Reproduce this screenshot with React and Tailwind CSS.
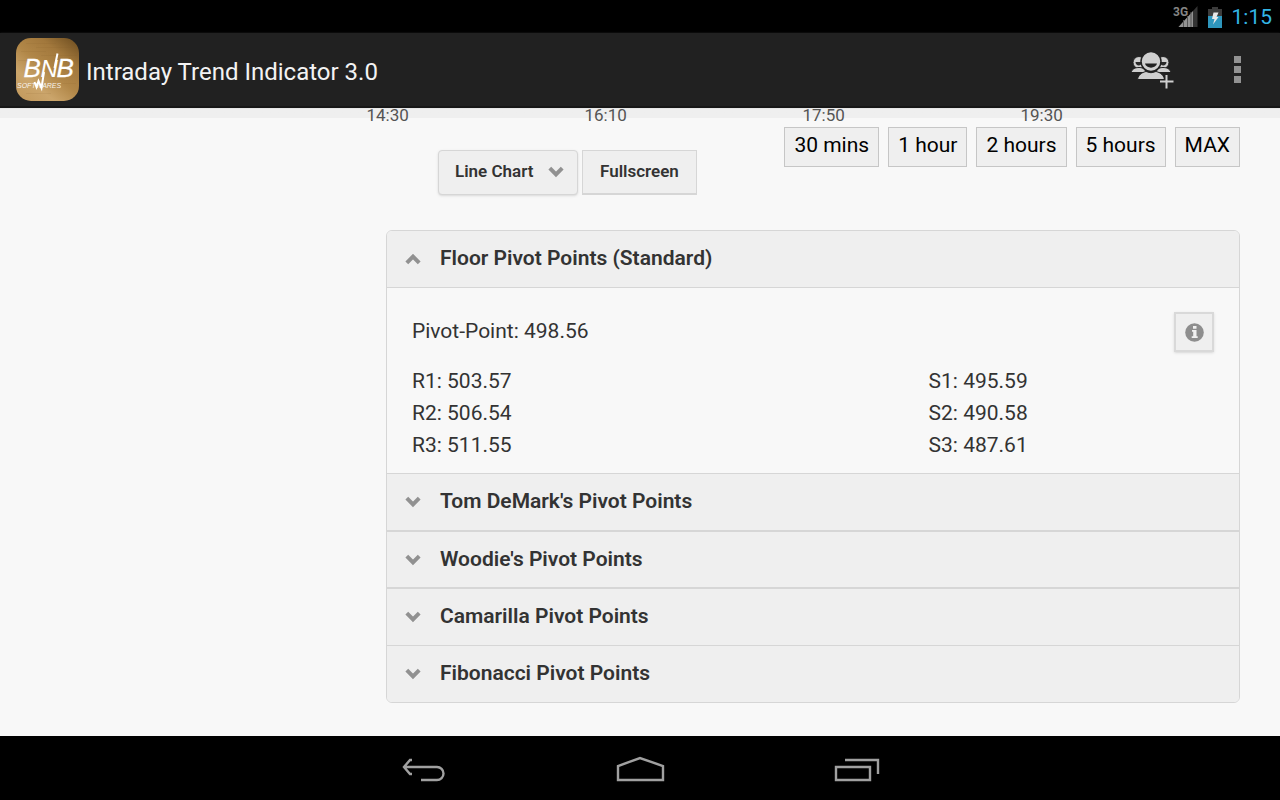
import React, { useState } from "react";

const ranges = ["30 mins", "1 hour", "2 hours", "5 hours", "MAX"];

const axisLabels = ["14:30", "16:10", "17:50", "19:30"];

const pivots = [
  {
    title: "Floor Pivot Points (Standard)",
    point: "498.56",
    resistance: ["503.57", "506.54", "511.55"],
    support: ["495.59", "490.58", "487.61"],
    divider: "h-14",
  },
  { title: "Tom DeMark's Pivot Points", divider: "h-[57px] border-t" },
  { title: "Woodie's Pivot Points", divider: "h-[57px] border-t-2" },
  { title: "Camarilla Pivot Points", divider: "h-[58px] border-t-2" },
  { title: "Fibonacci Pivot Points", divider: "h-[57px] border-t" },
];

const Chevron = ({ up }) => (
  <svg
    className={up ? "rotate-180" : ""}
    width="16"
    height="12"
    viewBox="0 0 16 12"
    fill="none"
    stroke="#919191"
    strokeWidth="4"
    aria-hidden="true"
  >
    <path d="M1.8 2.2 L8 8.4 L14.2 2.2" />
  </svg>
);

const Logo = () => (
  <svg width="63" height="63" viewBox="0 0 63 63" aria-hidden="true">
    <defs>
      <linearGradient id="gold" x1="0.1" y1="1" x2="0.9" y2="0">
        <stop offset="0" stopColor="#c39a5e" />
        <stop offset="0.25" stopColor="#cba56b" />
        <stop offset="0.5" stopColor="#b18748" />
        <stop offset="0.75" stopColor="#a2783c" />
        <stop offset="1" stopColor="#735223" />
      </linearGradient>
    </defs>
    <rect width="63" height="63" rx="15" fill="url(#gold)" />
    <g stroke="#7d5726" strokeOpacity="0.1" strokeWidth="1">
      <path d="M10 5.5H40M20 9.5H56M5 13.5H30M25 17.5H61M2 22.5H20M45 45.5H60M10 55.5H35" />
    </g>
    <g
      fill="#fff"
      fontFamily="'Liberation Sans', sans-serif"
      fontStyle="italic"
    >
      <g stroke="#fff" strokeWidth="0.3" fontSize="26">
        <text x="7.500" y="39">
          B
        </text>
        <text x="40.500" y="39">
          B
        </text>
      </g>
      <text x="24.500" y="39" fontSize="24">
        N
      </text>
      <text x="1" y="49.500" fontSize="7" fillOpacity="0.9">
        SOFTWARES
      </text>
    </g>
    {/* spikes of the trend line */}
    <path
      d="M38.500 30 L41.500 15.500 M28 34 L25.500 50 L22.500 43 L20.500 49 L18.500 44"
      fill="none"
      stroke="#fff"
      strokeWidth="2"
    />
  </svg>
);

const StatusBar = () => (
  <div className="flex h-[33px] items-center justify-end gap-2.5 bg-black pt-px pr-2">
    <svg width="25" height="22" viewBox="0 0 25 22" role="img">
      <title>Signal</title>
      <path d="M24.500 0V21H5.500Z" fill="#333" />
      <path d="M20 5V21H5.500Z" fill="#929292" />
      <path d="M10.500 14V21M14.500 10V21M18 6V21" stroke="#555" />
      <text
        x="0"
        y="10"
        fontSize="12"
        fontWeight="700"
        fontFamily="Roboto, sans-serif"
        fill="#858585"
        stroke="#000"
        strokeWidth="2"
        paintOrder="stroke"
      >
        3G
      </text>
    </svg>
    <svg width="14" height="21" viewBox="0 0 14 21" role="img">
      <title>Battery</title>
      <path d="M4 0H10V2H14V10H0V2H4Z" fill="#3c3c3c" />
      <rect y="9" width="14" height="12" fill="#2e96bd" />
      <path d="M5.500 5.500H10.500L8.500 10H10.500L5 17.500L6.500 12H4Z" fill="#e8e8e8" />
    </svg>
    <span className="text-[21px] leading-6 text-[#33b5e5]">1:15</span>
  </div>
);

const ActionBar = () => (
  <header className="flex h-[75px] items-center border-b-2 border-[#171717] bg-[#212121] pr-[35px] pl-4 shadow-[0_1px_2px_#888]">
    <Logo />
    <h1 className="ml-[7px] pt-1 text-2xl text-[#f3f3f3]">
      Intraday Trend Indicator 3.0
    </h1>
    <div className="ml-auto flex items-center gap-[55px]">
      <button type="button" aria-label="Add people">
        <svg width="44" height="38" viewBox="0 0 44 38" aria-hidden="true">
          <g fill="#cfcfcf" stroke="#212121">
            <circle cx="8" cy="11.500" r="6" />
            <circle cx="32" cy="11.500" r="6" />
            <path d="M0 21.500C1 17.500 5 16.500 8 16.500S14 17.500 15 21.500Z" />
            <path d="M25 21.500C26 17.500 29 16.500 32 16.500S39 17.500 40 21.500Z" />
            <path d="M4.500 11H11C11 15.500 4.500 15.500 4.500 11ZM29 11H35.500C35.500 15.500 29 15.500 29 11Z" fill="#2a2a2a" stroke="none" />
            <circle cx="20" cy="10.500" r="10" strokeWidth="1.500" />
            <path d="M6.500 28.500C7.500 22.500 13 21 15 20.500Q20 23 25 20.500C27 21 32.500 22.500 33.500 28.500Z" />
            <path d="M14 12.500H26C25 18 15 18 14 12.500Z" fill="#212121" stroke="none" />
          </g>
          <path d="M35.500 23V38M28 30.500H43" stroke="#212121" strokeWidth="5" />
          <path d="M35.500 24V37.500M29 30.500H42.500" stroke="#cfcfcf" strokeWidth="2" />
        </svg>
      </button>
      <button type="button" aria-label="More options" className="px-1">
        <svg width="7" height="27" viewBox="0 0 7 27" fill="#929292" aria-hidden="true">
          <path d="M0 0H7V7H0ZM0 10H7V17H0ZM0 20H7V27H0Z" />
        </svg>
      </button>
    </div>
  </header>
);

const PivotDetails = ({ item }) => (
  <div className="border-t border-[#d6d6d6] px-[25px] pt-6 pb-3 text-[21px] leading-8 text-[#333]">
    <div className="flex items-start justify-between">
      <p className="pt-[3px]">Pivot-Point: {item.point}</p>
      <button
        type="button"
        aria-label="About these pivot points"
        className="flex h-10 w-10 items-center justify-center border-2 border-[#d9d9d9] bg-[#efefef] shadow-sm"
      >
        <svg width="19" height="19" viewBox="0 0 19 19" aria-hidden="true">
          <circle cx="9.500" cy="9.500" r="9.300" fill="#8e8e8e" />
          <path
            d="M8 3H11.500V5.700H8ZM7 7H11.500V13.300H12.700V15H6.700V13.300H8.200V8.700H7Z"
            fill="#f1f1f1"
          />
        </svg>
      </button>
    </div>
    <div className="mt-[13px] grid grid-cols-[9fr_5fr]">
      <ul>
        {item.resistance.map((value, index) => (
          <li key={index}>
            R{index + 1}: {value}
          </li>
        ))}
      </ul>
      <ul className="pl-px">
        {item.support.map((value, index) => (
          <li key={index}>
            S{index + 1}: {value}
          </li>
        ))}
      </ul>
    </div>
  </div>
);

const NavBar = () => (
  <nav className="flex h-16 items-center justify-center gap-[166px] bg-black pt-[5px]">
    <button type="button" aria-label="Back">
      <svg width="52" height="30" viewBox="-3 0 52 30" fill="none" stroke="#a0a0a0" strokeWidth="2.4" aria-hidden="true">
        <path d="M5 11H38A6.500 6.500 0 0 1 38 24H22M13 4H11L5 11L11 18H13" />
      </svg>
    </button>
    <button type="button" aria-label="Home">
      <svg width="52" height="30" viewBox="0 0 52 30" fill="none" stroke="#a0a0a0" strokeWidth="2.4" aria-hidden="true">
        <path d="M4 24V10L26 2L49 10V24Z" />
      </svg>
    </button>
    <button type="button" aria-label="Recent apps">
      <svg width="52" height="30" viewBox="0 0 52 30" fill="none" stroke="#a0a0a0" strokeWidth="2.4" aria-hidden="true">
        <path d="M4 11H38V24H4ZM13 4H46V18" />
      </svg>
    </button>
  </nav>
);

const App = () => {
  const [open, setOpen] = useState(0);
  const [chartType, setChartType] = useState("Line Chart");

  return (
    <div className="flex min-h-screen flex-col bg-[#f8f8f8] font-['Roboto',sans-serif]">
      <StatusBar />
      <ActionBar />
      <main className="flex-1 pb-8">
        {/* time axis of the chart */}
        <div className="h-[19px] bg-linear-to-b from-[#dedede] from-0% via-[#efefef] via-10% to-[#efefef] to-50% bg-[length:100%_10px] bg-no-repeat">
          <div className="ml-[22%] flex pr-2 text-[17px] leading-[14px] text-[#545454]">
            {axisLabels.map((label) => (
              <span key={label} className="w-[218px] pr-1.5 text-center">
                {label}
              </span>
            ))}
          </div>
        </div>

        <div className="ml-[30%] pr-10 pl-0.5">
          <div className="flex items-start justify-between pl-[52px]">
            <div className="mt-[23px] flex gap-1 text-[17px] font-semibold text-[#333]">
              <div className="relative">
                <select
                  aria-label="Chart type"
                  value={chartType}
                  onChange={(e) => setChartType(e.target.value)}
                  className="h-[45px] w-[140px] appearance-none rounded border border-[#d6d6d6] bg-[#efefef] pb-0.5 pl-4 shadow"
                >
                  <option>Line Chart</option>
                  <option>Candlestick</option>
                </select>
                <span className="pointer-events-none absolute top-4 right-3.5">
                  <Chevron />
                </span>
              </div>
              <button
                type="button"
                className="h-[45px] border border-b-2 border-[#d6d6d6] bg-[#efefef] px-[17px]"
              >
                Fullscreen
              </button>
            </div>
            <div className="flex gap-[9px]">
              {ranges.map((range) => (
                <button
                  key={range}
                  type="button"
                  className="h-10 border border-[#c6c6c6] bg-[#efefef] px-[9px] pb-0.5 text-[21px] text-black"
                >
                  {range}
                </button>
              ))}
            </div>
          </div>

          <div className="mt-[35px] overflow-hidden rounded-md border border-[#d6d6d6]">
            {pivots.map((item, index) => (
              <section key={item.title}>
                <h2>
                  <button
                    type="button"
                    aria-expanded={open === index}
                    onClick={() => setOpen(index)}
                    className={`flex w-full items-center gap-[19px] border-[#d6d6d6] bg-[#efefef] pl-[18px] text-[21px] font-semibold text-[#333] ${item.divider}`}
                  >
                    <Chevron up={open === index} />
                    {item.title}
                  </button>
                </h2>
                {open === index && item.point && <PivotDetails item={item} />}
              </section>
            ))}
          </div>
        </div>
      </main>
      <NavBar />
    </div>
  );
};

export default App;
